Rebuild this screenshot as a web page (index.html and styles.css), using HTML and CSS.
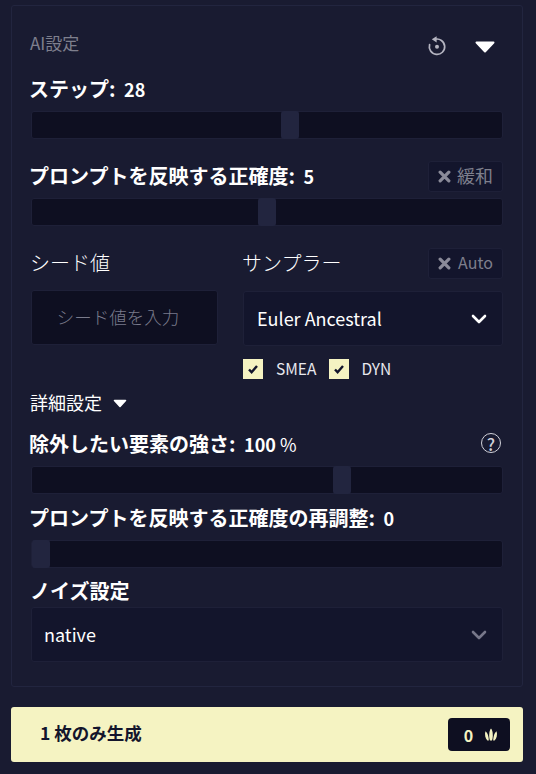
FILE: index.html
```html
<!DOCTYPE html>
<html lang="ja">
<head>
<meta charset="utf-8">
<title>AI設定</title>
<link rel="stylesheet" href="styles.css">
</head>
<body>
<section class="panel">
  <header class="head">
    <span class="head-title">AI設定</span>
    <div class="head-icons">
      <svg class="icon-reset" viewBox="0 0 20 20" width="20" height="20"><path d="M8 3.3A7.7 7.7 0 1 1 2.6 8.6" fill="none" stroke="#b4b4c0" stroke-width="1.7" stroke-linecap="round"/><path d="M9.6 0.2V6.4L4.8 3.3Z" fill="#b4b4c0"/><circle cx="10" cy="10.8" r="2" fill="#b4b4c0"/></svg>
      <svg class="icon-tri" viewBox="0 0 20 12" width="20" height="12"><path d="M1.5 1.5H18.5L10 10.5Z" fill="#fff" stroke="#fff" stroke-width="2" stroke-linejoin="round"/></svg>
    </div>
  </header>

  <div class="row row-a"><h3 class="label">ステップ: <span class="val">28</span></h3></div>
  <div class="slider"><span class="thumb" style="left:53%"></span></div>

  <div class="row row-b">
    <h3 class="label">プロンプトを反映する正確度: <span class="val">5</span></h3>
    <button class="chip chip-jp"><svg viewBox="0 0 12 12" width="13" height="13"><path d="M2 2L10 10M10 2L2 10" stroke="#8a8a98" stroke-width="3" stroke-linecap="round"/></svg><span class="chip-text">緩和</span></button>
  </div>
  <div class="slider"><span class="thumb" style="left:48.1%"></span></div>

  <div class="cols">
    <div class="col-seed">
      <div class="row-c"><span class="label-thin">シード値</span></div>
      <input class="seed" placeholder="シード値を入力">
    </div>
    <div class="col-sampler">
      <div class="row-c">
        <span class="label-thin">サンプラー</span>
        <button class="chip"><svg viewBox="0 0 12 12" width="13" height="13"><path d="M2 2L10 10M10 2L2 10" stroke="#8a8a98" stroke-width="3" stroke-linecap="round"/></svg><span class="chip-text">Auto</span></button>
      </div>
      <div class="select select-sampler">
        <span class="select-text">Euler Ancestral</span>
        <svg viewBox="0 0 16 10" width="16" height="10"><path d="M2 2L8 8L14 2" fill="none" stroke="#fff" stroke-width="2.6" stroke-linecap="round" stroke-linejoin="round"/></svg>
      </div>
      <div class="checks">
        <span class="check"><svg viewBox="0 0 20 20" width="20" height="20"><path d="M6 10.5L8.6 13.2L14 7" fill="none" stroke="#13152c" stroke-width="2.4"/></svg></span><span class="check-text">SMEA</span>
        <span class="check"><svg viewBox="0 0 20 20" width="20" height="20"><path d="M6 10.5L8.6 13.2L14 7" fill="none" stroke="#13152c" stroke-width="2.4"/></svg></span><span class="check-text check-last">DYN</span>
      </div>
    </div>
  </div>

  <div class="details">
    <span class="details-text">詳細設定</span>
    <svg viewBox="0 0 14 9" width="14" height="9"><path d="M1.5 1.5H12.5L7 7.5Z" fill="#fff" stroke="#fff" stroke-width="1.6" stroke-linejoin="round"/></svg>
  </div>

  <div class="row row-d">
    <h3 class="label">除外したい要素の強さ: <span class="val">100<span class="pct"> %</span></span></h3>
    <span class="help">?</span>
  </div>
  <div class="slider"><span class="thumb" style="left:64%"></span></div>

  <div class="row row-e"><h3 class="label">プロンプトを反映する正確度の再調整: <span class="val">0</span></h3></div>
  <div class="slider"><span class="thumb" style="left:0"></span></div>

  <h3 class="label noise">ノイズ設定</h3>
  <div class="select select-noise">
    <span class="select-text-plain">native</span>
    <svg viewBox="0 0 16 10" width="16" height="10"><path d="M2 2L8 8L14 2" fill="none" stroke="#77778a" stroke-width="2.6" stroke-linecap="round" stroke-linejoin="round"/></svg>
  </div>
</section>

<button class="generate">
  <span class="gen-text">1 枚のみ生成</span>
  <span class="badge">
    <span>0</span>
    <svg viewBox="0 0 14 13" width="14" height="13"><path d="M7 0.5C9.2 3 9.2 9.5 8 12.5H6C4.8 9.5 4.8 3 7 0.5Z" fill="#f5f3c2"/><path d="M1.4 3.2C3.6 4.5 4.8 9 4.8 12.5H3.4C1.4 10.5 0.4 6.5 1.4 3.2Z" fill="#f5f3c2"/><path d="M12.6 3.2C10.4 4.5 9.2 9 9.2 12.5H10.6C12.6 10.5 13.6 6.5 12.6 3.2Z" fill="#f5f3c2"/></svg>
  </span>
</button>
</body>
</html>
```
FILE: styles.css
```css
* { box-sizing: border-box; }
html, body { margin: 0; padding: 0; }
body {
  width: 536px;
  height: 774px;
  overflow: hidden;
  background: #191b31;
  padding: 5px 13px 0 11px;
  color: #fff;
  font-family: "Noto Sans CJK JP", "Noto Sans", sans-serif;
}
.panel {
  height: 682px;
  border: 1px solid #22253f;
  border-radius: 3px;
  background: #191b31;
  padding: 24px 19px 0;
}
.head { height: 28px; margin-bottom: 17px; display: flex; align-items: center; justify-content: space-between; }
.head-title { font-size: 17px; color: #7e7f8d; line-height: 28px; margin-left: -1px; padding-bottom: 2px; }
.head-icons { display: flex; align-items: center; gap: 28px; margin-right: 8px; }
.icon-reset { margin-top: 4px; }
.icon-tri { margin-top: 5px; }
.label { margin: 0 0 0 -2px; padding-bottom: 2px; font-size: 20px; font-weight: 700; line-height: 30px; }
.val { font-size: 18px; margin-left: 4px; }
.pct { font-weight: 400; }
.row { display: flex; align-items: center; justify-content: space-between; }
.row-a { height: 30px; margin-bottom: 6px; }
.row-b { height: 31px; margin-top: 22.5px; margin-bottom: 6px; }
.row-d { height: 30px; margin-bottom: 6px; }
.row-e { height: 30px; margin-top: 9.5px; margin-bottom: 7px; }
.row-e .label { padding-bottom: 0; }
.slider {
  position: relative;
  height: 27.5px;
  background: #0e0f21;
  border: 1px solid #1e2038;
  border-radius: 3px;
}
.thumb {
  position: absolute;
  top: -1px;
  bottom: -1px;
  width: 18px;
  background: #22253f;
  border-radius: 3px;
}
.chip {
  width: 75px;
  height: 31px;
  display: flex;
  align-items: center;
  justify-content: center;
  gap: 7px;
  background: #13152c;
  border: 1px solid #1e2038;
  border-radius: 3px;
  padding: 0;
  font-family: inherit;
  font-size: 16px;
  color: #7e7f8d;
}
.chip-jp { font-size: 18px; gap: 6px; }
.chip-text { padding-bottom: 3px; }
.cols { display: flex; gap: 25px; margin-top: 22.5px; }
.col-seed { width: 187px; }
.col-sampler { flex: 1; }
.row-c { height: 31px; display: flex; align-items: center; justify-content: space-between; }
.label-thin { font-size: 20px; line-height: 30px; font-weight: 300; padding-bottom: 2px; margin-left: -1px; }
.seed {
  display: block;
  width: 100%;
  height: 55px;
  margin-top: 11px;
  background: #0e0f21;
  border: 1px solid #1e2038;
  border-radius: 3px;
  font-family: inherit;
  font-size: 17.5px;
  font-weight: 300;
  text-align: center;
  color: #fff;
  outline: none;
  padding: 0 13px 2px 0;
}
.seed::placeholder { color: #7a7b8c; opacity: 1; }
.select {
  display: flex;
  align-items: center;
  justify-content: space-between;
  background: #13152c;
  border: 1px solid #1e2038;
  border-radius: 3px;
  font-size: 18px;
  padding: 0 15px 0 12px;
}
.select-text { padding: 0 0 2px 1px; }
.select-text-plain { padding-bottom: 2px; }
.select-sampler { height: 55px; margin-top: 12px; }
.select-noise { height: 55px; margin-top: 2px; }
.checks { display: flex; align-items: center; height: 20px; margin-top: 13px; font-size: 15.5px; }
.check { width: 20px; height: 20px; background: #f5f3c2; display: block; }
.check svg { display: block; }
.check-text { margin-left: 13px; margin-right: 13px; padding-bottom: 2px; color: #e8e8ee; }
.check-last { margin-left: 12px; }
.details { display: flex; align-items: center; gap: 11px; height: 24px; margin-top: 12px; margin-bottom: 15px; margin-left: -1px; font-size: 18px; }
.details-text { padding-bottom: 2px; }
.help {
  width: 20px;
  height: 20px;
  margin: -4px 2px 0 0;
  display: flex;
  align-items: center;
  justify-content: center;
  border: 1.8px solid #d2d2da;
  border-radius: 50%;
  font-size: 17px;
  font-weight: 500;
  line-height: 1;
  color: #d2d2da;
}
.noise { height: 28px; line-height: 28px; margin: 9.5px 0 0 -1px; padding: 0; }
.generate {
  width: 512px;
  height: 55px;
  margin-top: 20px;
  display: flex;
  align-items: center;
  justify-content: space-between;
  background: #f5f3c2;
  border: 0;
  border-radius: 3px;
  padding: 0 13px 0 29px;
  font-family: inherit;
  color: #13152c;
}
.gen-text { font-size: 17.5px; font-weight: 700; padding-bottom: 5px; }
.badge {
  width: 62px;
  height: 33px;
  display: flex;
  align-items: center;
  justify-content: center;
  gap: 11px;
  padding-left: 4px;
  background: #0e0f21;
  border-radius: 4px;
  color: #f5f3c2;
  font-size: 16px;
  font-weight: 700;
}
```
